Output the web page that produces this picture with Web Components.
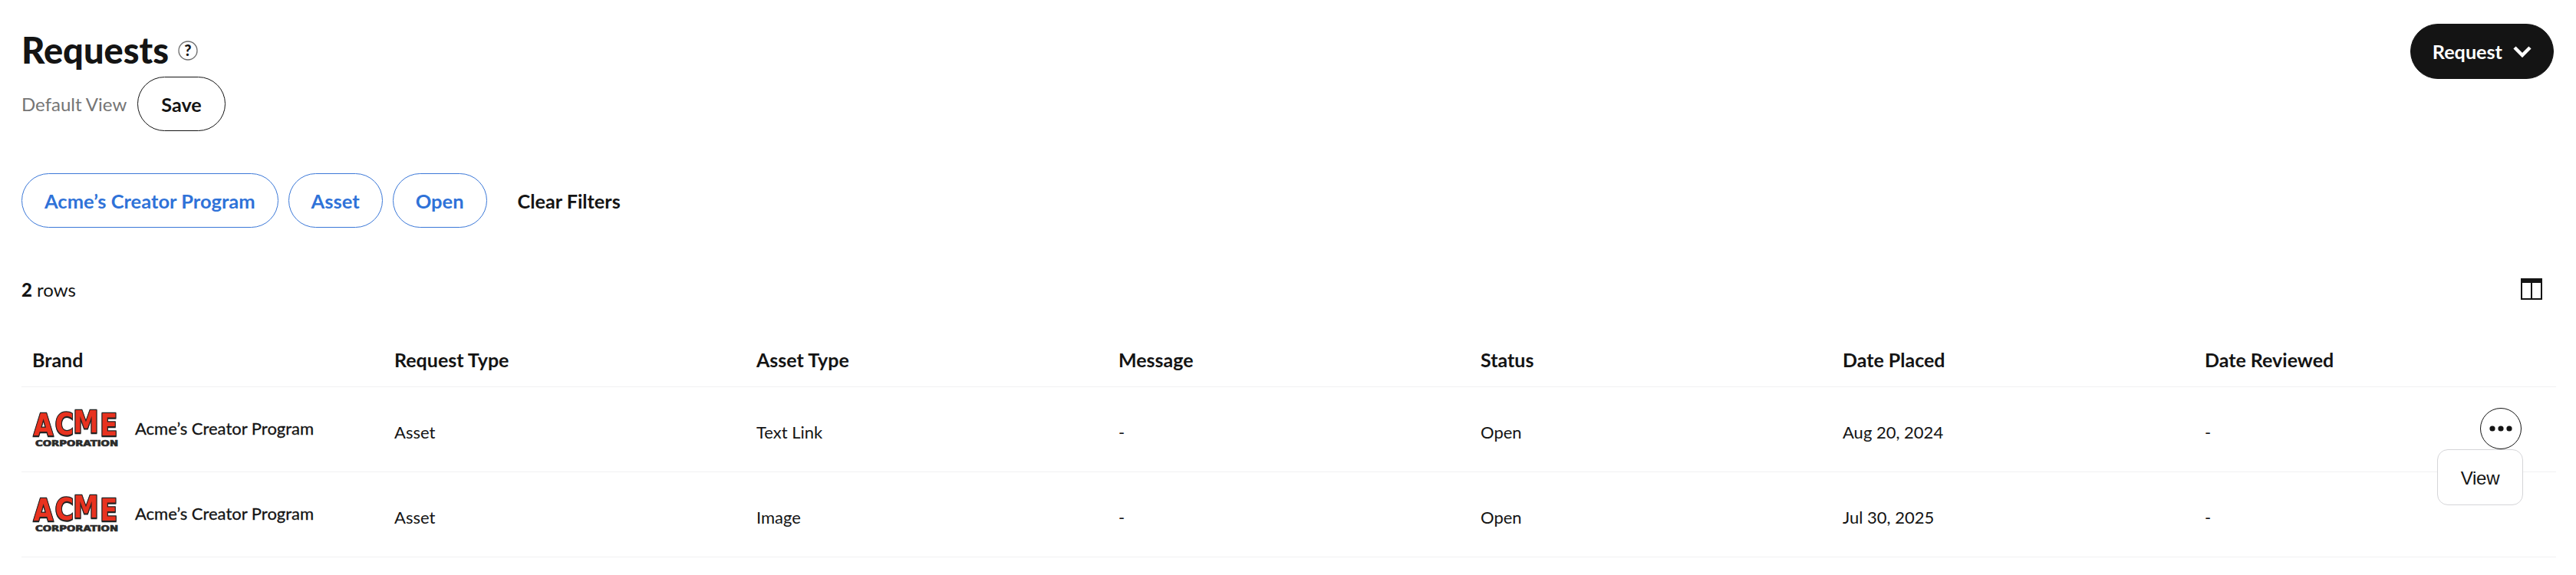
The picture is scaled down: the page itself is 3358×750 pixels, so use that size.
<!DOCTYPE html>
<html>
<head>
<meta charset="utf-8">
<style>
html,body{margin:0;background:#fff;}
body{font-family:"Lato","Noto Sans",sans-serif;color:#141414;}
</style>
</head>
<body>
<request-page></request-page>
<script>
class PillButton extends HTMLElement{
    constructor(){
        super();
        this.attachShadow({mode:'open'});
        this.shadowRoot.innerHTML=`
            <style>
            :host{display:inline-flex;align-items:center;box-sizing:border-box;height:71px;padding:0 30px;border:1.5px solid #141414;border-radius:36px;font-size:25.2px;font-weight:700;color:#141414;white-space:nowrap;background:#fff;}
            :host([kind=filter]){border-color:#3b78d8;color:#2f72d8;padding:0 29px;font-size:25.5px;}
            :host([kind=plain]){border-color:transparent;background:none;}
            :host([kind=solid]){background:#141414;border-color:#141414;color:#fff;height:72px;gap:14px;margin-right:3px;padding:0 28px;}
            </style>
            <slot></slot>`;
    }
}
customElements.define('pill-button',PillButton);

class AcmeLogo extends HTMLElement{
    constructor(){
        super();
        this.attachShadow({mode:'open'});
        this.shadowRoot.innerHTML=`
            <style>
            :host{display:block;width:116px;height:50px;flex:none;}
            svg{display:block;overflow:visible;}
            text{font-family:"DejaVu Sans",sans-serif;font-weight:700;}
            .big{fill:#e8321f;stroke:#232323;stroke-width:2.4px;paint-order:stroke;font-size:39px;filter:drop-shadow(0 1.5px 0 #232323);}
            .small{fill:#2b2b2b;stroke:#2b2b2b;stroke-width:.7px;font-size:10px;}
            </style>
            <svg width="116" height="50" viewBox="0 0 116 50">
                <g transform="scale(.85 1)"><text class="big" x="2 35 63 104" y="33 32 29 33">ACME</text></g>
                <text class="small" x="4" y="47" textLength="108" lengthAdjust="spacingAndGlyphs">CORPORATION</text>
            </svg>`;
    }
}
customElements.define('acme-logo',AcmeLogo);

class DataRow extends HTMLElement{
    constructor(){
        super();
        this.attachShadow({mode:'open'});
        this.shadowRoot.innerHTML=`
            <style>
            :host{display:grid;grid-template-columns:repeat(7,472px);box-sizing:border-box;height:111px;border-bottom:1px solid #f1f1f2;font-size:22px;color:#141414;position:relative;}
            .cell{padding:6px 14px 0;display:flex;align-items:center;white-space:nowrap;}
            .brand{padding:0 0 0 14px;gap:18px;}
            .brand span{padding-bottom:4px;-webkit-text-stroke:.3px #141414;}
            </style>
            <div class="cell brand"><acme-logo></acme-logo><span>Acme’s Creator Program</span></div>
            <div class="cell">Asset</div>
            <div class="cell">${this.getAttribute('asset')}</div>
            <div class="cell">-</div>
            <div class="cell">Open</div>
            <div class="cell">${this.getAttribute('date')}</div>
            <div class="cell">-</div>
            <slot></slot>`;
    }
}
customElements.define('data-row',DataRow);

class RowMenu extends HTMLElement{
    constructor(){
        super();
        this.attachShadow({mode:'open'});
        this.shadowRoot.innerHTML=`
            <style>
            :host{position:absolute;right:45px;top:27px;width:54px;height:54px;z-index:2;}
            .dots{box-sizing:border-box;width:54px;height:54px;border:1.5px solid #141414;border-radius:50%;display:flex;align-items:center;justify-content:center;background:#fff;}
            .pop{position:absolute;top:54px;right:-2px;box-sizing:border-box;width:112px;height:73px;padding-top:2px;border:1px solid #d5d5d8;border-radius:14px;background:#fff;display:flex;align-items:center;justify-content:center;font:24px "Liberation Sans",sans-serif;letter-spacing:-.3px;color:#141414;}
            </style>
            <div class="dots"><svg width="30" height="8" viewBox="0 0 30 8" fill="#141414"><circle cx="4" cy="4" r="3.6"/><circle cx="15" cy="4" r="3.6"/><circle cx="26" cy="4" r="3.6"/></svg></div>
            <div class="pop">View</div>`;
    }
}
customElements.define('row-menu',RowMenu);

class RequestPage extends HTMLElement{
    constructor(){
        super();
        this.attachShadow({mode:'open'});
        this.shadowRoot.innerHTML=`
            <style>
            :host{display:block;box-sizing:border-box;width:3358px;height:750px;padding:31px 26px 0 28px;overflow:hidden;}
            .top{display:flex;justify-content:space-between;align-items:flex-start;}
            .title{display:flex;align-items:center;gap:12px;height:69px;font-size:47px;font-weight:900;line-height:69px;}
            .view{display:flex;align-items:center;gap:14px;font-size:24px;color:#757575;}
            .filters{display:flex;align-items:center;gap:13px;margin-top:55px;}
            .filters pill-button:last-child{margin-left:10px;padding:0 28px 0 16px;}
            .count{display:flex;justify-content:space-between;align-items:center;margin-top:52px;margin-right:18px;height:56px;font-size:24px;}
            .count b{font-weight:900;}
            .table{width:3304px;margin-top:29px;}
            .head{display:grid;grid-template-columns:repeat(7,472px);height:71px;border-bottom:1px solid #f1f1f2;font-size:25px;font-weight:700;box-sizing:border-box;}
            .head div{padding:0 14px;display:flex;align-items:center;}
            </style>
            <div class="top">
                <div>
                    <div class="title">Requests
                        <svg width="26" height="26" viewBox="0 0 26 26"><circle cx="13" cy="13" r="12" fill="none" stroke="#6e6e6e" stroke-width="1.3"/><text x="13" y="20" text-anchor="middle" font-family="Lato,sans-serif" font-size="20" font-weight="900" fill="#141414">?</text></svg>
                    </div>
                    <div class="view"><span>Default View</span><pill-button>Save</pill-button></div>
                </div>
                <pill-button kind="solid">Request
                    <svg width="24" height="16" viewBox="0 0 24 16" fill="none" stroke="#fff" stroke-width="4.5"><path d="M2 3l10 10L22 3"/></svg>
                </pill-button>
            </div>
            <div class="filters">
                <pill-button kind="filter">Acme’s Creator Program</pill-button>
                <pill-button kind="filter">Asset</pill-button>
                <pill-button kind="filter">Open</pill-button>
                <pill-button kind="plain">Clear Filters</pill-button>
            </div>
            <div class="count"><span><b>2</b> rows</span>
                <svg width="28" height="28" viewBox="0 0 28 28" fill="none" stroke="#141414"><rect x="1" y="1" width="26" height="26" stroke-width="2"/><path d="M0 3h28" stroke-width="6"/><path d="M14 3v24" stroke-width="2"/></svg>
            </div>
            <div class="table">
                <div class="head"><div>Brand</div><div>Request Type</div><div>Asset Type</div><div>Message</div><div>Status</div><div>Date Placed</div><div>Date Reviewed</div></div>
                <data-row asset="Text Link" date="Aug 20, 2024"><row-menu></row-menu></data-row>
                <data-row asset="Image" date="Jul 30, 2025"></data-row>
            </div>`;
    }
}
customElements.define('request-page',RequestPage);
</script>
</body>
</html>
